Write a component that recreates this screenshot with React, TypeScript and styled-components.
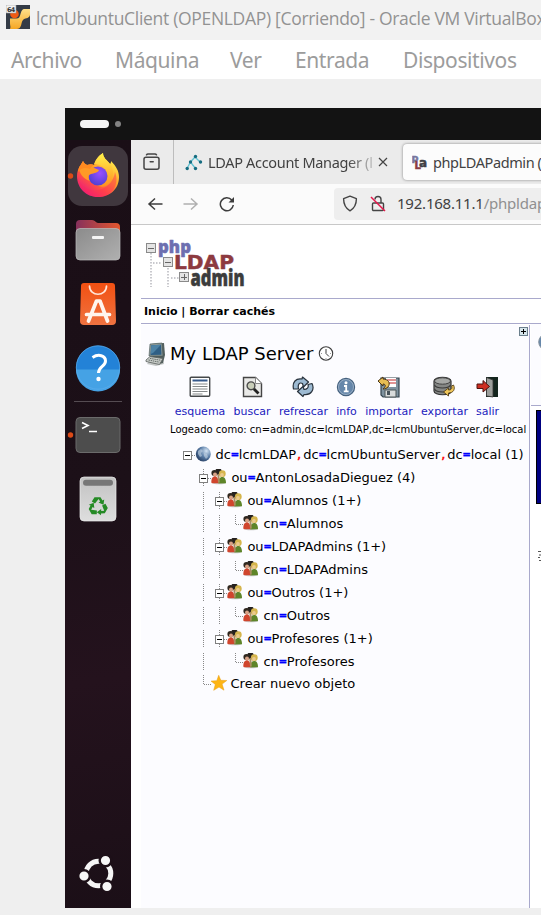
import React from "react";
import styled, { createGlobalStyle } from "styled-components";

const GlobalStyle = createGlobalStyle`
  * { box-sizing: border-box; }
  html, body { margin: 0; padding: 0; background: #efefef; overflow: hidden; }
  svg { display: block; flex: none; }
`;

const ubuntu = `"Noto Sans", "Open Sans", sans-serif`;
const dejavu = `"DejaVu Sans", sans-serif`;

const HostWindow = styled.div`
  width: 541px;
  height: 915px;
  overflow: hidden;
  display: flex;
  flex-direction: column;
  background: #efefef;
  white-space: nowrap;
`;

const TitleBar = styled.header`
  height: 40px;
  flex: none;
  display: flex;
  align-items: center;
  gap: 6px;
  padding: 0 0 6px 6px;
  background: #f2f2f2;
  color: #929292;
  font: 17.5px/24px "Open Sans", sans-serif;
  letter-spacing: -0.31px;
  span { padding-top: 1px; }
`;

const MenuBar = styled.nav`
  height: 39px;
  flex: none;
  display: flex;
  align-items: center;
  padding: 0 0 0 11px;
  background: #fff;
`;

const MenuItem = styled.span<{ $w: number }>`
  width: ${(p) => p.$w}px;
  flex: none;
  color: #9c9c9c;
  font: 21px/32px "Noto Sans", sans-serif;
  letter-spacing: -0.4px;
`;

const Guest = styled.main`
  margin: 29px 0 0 65px;
  width: 476px;
  height: 800px;
  flex: none;
  display: flex;
  flex-direction: column;
  overflow: hidden;
  background: #fff;
`;

const TopPanel = styled.div`
  height: 32px;
  flex: none;
  display: flex;
  align-items: center;
  gap: 6px;
  padding-left: 15px;
  background: #131313;
`;

const Pill = styled.i`
  width: 29px;
  height: 8px;
  border-radius: 4px;
  background: #f5f5f5;
`;

const Dot = styled.i`
  width: 6px;
  height: 6px;
  border-radius: 3px;
  background: #828282;
`;

const Desktop = styled.div`
  flex: 1;
  display: flex;
  min-height: 0;
`;

const Dock = styled.aside`
  width: 66px;
  flex: none;
  display: flex;
  flex-direction: column;
  padding: 4px 0 3px;
  background: linear-gradient(170deg, #1a0e16 0%, #1c1018 45%, #24121d 70%, #1b0f17 100%);
`;

const Slot = styled.div<{ $last?: boolean }>`
  height: 64px;
  flex: none;
  display: flex;
  align-items: center;
  padding-left: 2px;
  margin-top: ${(p) => (p.$last ? "auto" : "0")};
`;

const Separator = styled.hr`
  width: 48px;
  height: 1px;
  flex: none;
  margin: 1px 9px;
  border: 0;
  background: #554c52;
`;

const Browser = styled.section`
  flex: 1;
  min-width: 0;
  display: flex;
  flex-direction: column;
  overflow: hidden;
`;

const TabStrip = styled.div`
  height: 44px;
  flex: none;
  display: flex;
  background: #ebebeb;
`;

const TabsOverview = styled.div`
  width: 43px;
  flex: none;
  display: grid;
  place-items: center;
  padding-right: 1px;
  border-right: 1px solid #bdbdbd;
`;

const Tab = styled.div<{ $active?: boolean }>`
  width: ${(p) => (p.$active ? 200 : 225)}px;
  height: ${(p) => (p.$active ? 36 : 44)}px;
  flex: none;
  margin: ${(p) => (p.$active ? "4px 0 0 4px" : "0")};
  padding: ${(p) => (p.$active ? "0 0 0 9px" : "0 0 0 11px")};
  display: flex;
  align-items: center;
  border-radius: ${(p) => (p.$active ? 4 : 0)}px;
  background: ${(p) => (p.$active ? "#fcfcfc" : "transparent")};
  box-shadow: ${(p) => (p.$active ? "0 0 3px rgba(0,0,0,.45)" : "none")};
  color: #424242;
  font: 14.5px/20px ${ubuntu};
`;

const TabTitle = styled.span<{ $w: number; $fade?: boolean; $ls?: number }>`
  width: ${(p) => p.$w}px;
  overflow: hidden;
  margin-left: 5px;
  margin-top: -1px;
  letter-spacing: ${(p) => p.$ls ?? 0}px;
  mask-image: ${(p) => (p.$fade ? "linear-gradient(90deg, #000 82%, rgba(0,0,0,.1))" : "none")};
`;

const NavBar = styled.div`
  height: 41px;
  flex: none;
  display: flex;
  align-items: center;
  padding: 0 0 1px 16px;
  background: #fbfbfb;
  border-bottom: 1px solid #c8c8c8;
`;

const NavButtons = styled.div`
  display: flex;
  gap: 20px;
  width: 187px;
  flex: none;
`;

const UrlField = styled.div`
  height: 32px;
  width: 230px;
  flex: none;
  display: flex;
  align-items: center;
  gap: 12px;
  padding-left: 8px;
  border-radius: 4px;
  background: #eeeeee;
  color: #404040;
  font: 15px/20px ${ubuntu};
  letter-spacing: -0.22px;
`;

const UrlText = styled.span`
  margin: -1px 0 0 -1px;
`;

const UrlPath = styled.span`
  color: #909090;
`;

const Page = styled.div`
  flex: 1;
  min-height: 0;
  padding-left: 10px;
  display: flex;
  flex-direction: column;
  background: #fff;
  font-family: ${dejavu};
  color: #000;
`;

const Brand = styled.div`
  height: 73px;
  flex: none;
  padding: 14px 0 0 4px;
`;

const PageMenu = styled.div`
  height: 26px;
  flex: none;
  padding-left: 3px;
  border-top: 1px solid #a9a9cc;
  border-bottom: 1px solid #a9a9cc;
  font: bold 11px/25px ${dejavu};
`;

const Columns = styled.div`
  flex: 1;
  min-height: 0;
  display: flex;
`;

const TreePane = styled.div`
  width: 389px;
  flex: none;
  display: flex;
  flex-direction: column;
  margin-top: 1px;
  background: #fcfcff;
  border-right: 1px solid #a9a9cc;
`;

const ExpandRow = styled.div`
  height: 12px;
  flex: none;
  display: flex;
  justify-content: flex-end;
  padding: 2px 1px 0 0;
`;

const ServerRow = styled.div`
  height: 34px;
  flex: none;
  display: flex;
  align-items: center;
  padding-left: 4px;
  font: 18px/24px ${dejavu};
`;

const ServerName = styled.span`
  width: 151px;
  padding-left: 3px;
`;

const Toolbar = styled.div`
  height: 50px;
  flex: none;
  display: flex;
  gap: 8px;
  padding: 5px 0 0 34px;
`;

const Tool = styled.div<{ $w: number }>`
  width: ${(p) => p.$w}px;
  flex: none;
  display: flex;
  flex-direction: column;
  align-items: center;
  gap: 7px;
  color: #1b1bbd;
  font: 11px/14px ${dejavu};
  svg { margin-left: -1px; }
`;

const LoginInfo = styled.div`
  height: 22px;
  flex: none;
  padding: 2px 0 0 29px;
  font: 10px/14px ${dejavu};
`;

const TreeRow = styled.div<{ $h?: number }>`
  height: ${(p) => p.$h ?? 23}px;
  flex: none;
  display: flex;
  align-items: center;
  padding-left: 38px;
  font: 13px/20px ${dejavu};
`;

const Label = styled.span<{ $pad?: number }>`
  padding-left: ${(p) => p.$pad ?? 4.4}px;
`;

const Equals = styled.b`
  display: inline-block;
  width: 8px;
  color: #0000ff;
  font-size: 10.5px;
  line-height: 10px;
  vertical-align: 1px;
  text-indent: -0.4px;
  -webkit-text-stroke: 0.3px #0000ff;
`;

const Comma = styled.em`
  margin-left: 1px;
  margin-right: 2px;
  color: #ff0000;
  font-style: normal;
  -webkit-text-stroke: 0.5px #ff0000;
`;

const DetailPane = styled.div`
  flex: 1;
  min-width: 0;
  padding-left: 1px;
  overflow: hidden;
  display: flex;
  flex-direction: column;
`;

const DetailHead = styled.div`
  height: 82px;
  flex: none;
  padding: 9px 0 0 7px;
  border-bottom: 1px solid #a9a9cc;
  background: #fcfcff;
`;

const NavyBox = styled.div`
  height: 94px;
  flex: none;
  margin: 4px 0 0 5px;
  border: 1px solid #000;
  border-right: 0;
  background: #000080;
`;

const Scrap = styled.div`
  margin: 46px 0 0 7px;
  height: 14px;
`;

function VirtualBoxIcon() {
  return (
    <svg width="24" height="24" viewBox="0 0 24 24">
      <defs>
        <linearGradient id="vb" x1="0" y1="0" x2="0" y2="1">
          <stop offset="0" stopColor="#ffe08a" />
          <stop offset="1" stopColor="#f5a623" />
        </linearGradient>
      </defs>
      <rect width="24" height="24" fill="#343b46" />
      <path d="M24 4h-5c-3 0-3.500 2-4.500 5-.8 3-1.500 4.500-4 4.500H4v5c0 2 1 3.500 0 5.500h7c3 0 4-3 4.500-5.500.6-3 2-4.500 4-5 3-.5 4.500-2 4.500-4z" fill="url(#vb)" />
      <circle cx="8.500" cy="9" r="4.300" fill="#f05a14" />
      <rect width="10" height="8" fill="#f4f4f4" stroke="#999" strokeWidth=".6" />
      <text x="1" y="6.700" fontSize="6.500" fontWeight="bold" fontFamily="DejaVu Sans" fill="#333" textLength="8">64</text>
    </svg>
  );
}

function Firefox() {
  return (
    <svg width="62" height="60" viewBox="0 0 62 60">
      <defs>
        <linearGradient id="ffBody" x1=".85" y1=".1" x2=".2" y2="1">
          <stop offset="0" stopColor="#fff44f" />
          <stop offset=".38" stopColor="#ffa52a" />
          <stop offset=".68" stopColor="#ff4f45" />
          <stop offset="1" stopColor="#e5108c" />
        </linearGradient>
        <radialGradient id="ffGlobe" cx=".6" cy=".35" r=".7">
          <stop offset="0" stopColor="#9a4fff" />
          <stop offset="1" stopColor="#4d3fd0" />
        </radialGradient>
        <linearGradient id="ffFlame" x1="0" y1="0" x2="0" y2="1">
          <stop offset="0" stopColor="#fff24a" />
          <stop offset="1" stopColor="#ff9020" />
        </linearGradient>
      </defs>
      <rect x="1" width="60" height="60" rx="14" fill="#40373e" />
      <circle cx="3.500" cy="30" r="2.700" fill="#dc4a17" />
      <path d="M16 15c1 2 2 3 4 4 3-1 5-1 7 0 2-6 4-9 9-12 0 5 4 7 7 11 1-1 1-2 1-3 5 5 8 10 8 16 0 12-9 20-21 20S10 42 10 30c0-4 1-7 3-10 1-2 2-3 3-5z" fill="url(#ffBody)" />
      <path d="M27 18c2-5 5-8 9-11 0 5 4 7 7 11 4 6 4 13 0 18-3 5-9 6-13 3 8-2 11-8 9-14-2-5-7-7-12-7z" fill="url(#ffFlame)" />
      <circle cx="31" cy="30" r="9.500" fill="url(#ffGlobe)" />
      <path d="M12 21c4-3 9-3 13 0l7 3c-1 3-5 3-8 4-3 1-3 4-1 7-7-2-11-8-11-14z" fill="#ff9a26" />
      <path d="M16 15c1 2 2 3 4 4 3-1 5-1 7 0-2 1-3 2-4 4-5-2-9-1-12 3 0-4 3-7 5-11z" fill="#ff8a20" />
      <path d="M11 32c3 10 14 15 24 11 7-3 12-9 13-17 5 13-3 25-17 25-11 0-19-8-20-19z" fill="#ff2a55" opacity=".45" />
    </svg>
  );
}

function Folder() {
  return (
    <svg width="62" height="60" viewBox="0 0 62 60">
      <defs>
        <linearGradient id="fdB"><stop offset="0" stopColor="#86305c" /><stop offset="1" stopColor="#e4572e" /></linearGradient>
        <linearGradient id="fdF" x2="1" y2="1"><stop offset="0" stopColor="#8b8b8b" /><stop offset="1" stopColor="#b0b0b0" /></linearGradient>
      </defs>
      <path d="M9 14a4 4 0 0 1 4-4h12c3 0 4 3 6 3h18a4 4 0 0 1 4 4v12H9z" fill="url(#fdB)" />
      <rect x="9" y="18.500" width="44" height="31.500" rx="4" fill="url(#fdF)" stroke="#bdbdbd" strokeWidth=".7" />
      <rect x="25" y="26" width="12" height="3" rx="1" fill="#f5f5f5" />
    </svg>
  );
}

function AppCenter() {
  return (
    <svg width="62" height="60" viewBox="0 0 62 60">
      <defs><linearGradient id="bag" x2="0" y2="1"><stop offset="0" stopColor="#f25012" /><stop offset="1" stopColor="#ef7341" /></linearGradient></defs>
      <path d="M17 9h28a3 3 0 0 1 3 3l1 35a4 4 0 0 1-4 4H17a4 4 0 0 1-4-4l1-35a3 3 0 0 1 3-3z" fill="url(#bag)" />
      <path d="M22.500 12c0 11 17 11 17 0" fill="none" stroke="#ffe5d8" strokeWidth="1.700" strokeLinecap="round" />
      <path d="M21.500 47L29.500 27h3.500l7.500 20M19.500 40.500h23" fill="none" stroke="#fff5ee" strokeWidth="3.700" strokeLinejoin="round" strokeLinecap="round" />
    </svg>
  );
}

function Help() {
  return (
    <svg width="62" height="60" viewBox="0 0 62 60">
      <g transform="translate(0 -.5)">
        <circle cx="31" cy="30" r="22" fill="#2382d7" />
        <path d="M9 32h44a22 22 0 0 1-44 0z" fill="#45a2e5" />
        <circle cx="31" cy="30" r="21.700" fill="none" stroke="#5cadec" strokeWidth=".7" />
        <path d="M25.500 20c6-4 13-2 13 3.500 0 5.500-7 5.500-7 12" fill="none" stroke="#fff" strokeWidth="3" />
        <circle cx="31.500" cy="41.500" r="2.200" fill="#fff" />
      </g>
    </svg>
  );
}

function Terminal() {
  return (
    <svg width="62" height="60" viewBox="0 0 62 60">
      <circle cx="3.500" cy="30" r="2.700" fill="#dc4a17" />
      <rect x="9" y="12.500" width="44" height="35" rx="4" fill="#4d4d4d" stroke="#6b6b6b" />
      <path d="M15 17.500l6 3-6 3M22 26.500h8" fill="none" stroke="#fff" strokeWidth="1.600" />
    </svg>
  );
}

function Trash() {
  return (
    <svg width="62" height="60" viewBox="0 0 62 60">
      <defs><linearGradient id="tr" x2="0" y2="1"><stop offset="0" stopColor="#c2c2c2" /><stop offset="1" stopColor="#dedede" /></linearGradient></defs>
      <rect x="13" y="8" width="36" height="44" rx="4" fill="url(#tr)" stroke="#ececec" strokeWidth=".7" />
      <rect x="16" y="10.800" width="30" height="6" rx="3" fill="#777" />
      <g fill="#258a25" transform="translate(31 37.500)">
        {[0, 120, 240].map((r) => (
          <g key={r} transform={`rotate(${r})`}>
            <path d="M-6.200-5L-3.500-9.300h6l2 3.300 1.700-1-.7 5.200L.5-4l1.700-1L.6-7.500-3-3z" />
          </g>
        ))}
      </g>
    </svg>
  );
}

function UbuntuLogo() {
  return (
    <svg width="62" height="60" viewBox="0 0 62 60">
      <circle cx="31.500" cy="30.500" r="12.300" fill="none" stroke="#f5f5f5" strokeWidth="5" />
      {[[17, 33], [38.500, 17.500], [40, 43.500]].map(([x, y]) => (
        <circle key={x} cx={x} cy={y} r="5.800" fill="#f7f7f7" stroke="#1d1018" strokeWidth="2.400" />
      ))}
    </svg>
  );
}

function OverviewIcon() {
  return (
    <svg width="18" height="18" viewBox="0 0 18 18" fill="none" stroke="#464646" strokeWidth="1.500" strokeLinecap="round">
      <path d="M3.500 1.800Q4 1 5 1h7q1 0 1.500.8" />
      <rect x="1" y="4.200" width="15" height="12" rx="2" />
      <path d="M7.200 8.800h3" />
    </svg>
  );
}

function LamIcon() {
  return (
    <svg width="18" height="17" viewBox="0 0 18 17">
      <path d="M10 3L5.500 8 2 14.500M10 3l5 5M5.500 8l5 6.500" stroke="#62c3d3" strokeWidth="1.300" fill="none" />
      {[[10.500, 2.500], [5.500, 8], [15.500, 8], [2.200, 14.500], [10.500, 14.500]].map(([x, y], i) => (
        <circle key={i} cx={x} cy={y} r="1.700" fill="#156c80" />
      ))}
    </svg>
  );
}

function PlaIcon() {
  return (
    <svg width="16" height="17" viewBox="0 0 16 17" fontFamily="DejaVu Sans" fontWeight="bold" strokeWidth=".5">
      <text x="-.5" y="8.500" fontSize="9.500" fill="#77779f" stroke="#77779f">P</text>
      <text x="2.500" y="15" fontSize="10" fill="#8b3b42" stroke="#8b3b42">L</text>
      <text x="7" y="13" fontSize="12" fill="#404044" stroke="#404044">a</text>
    </svg>
  );
}

function Logo() {
  const box = (x: number, y: number, plus?: boolean) => (
    <g transform={`translate(${x} ${y})`} shapeRendering="crispEdges">
      <rect x=".5" y=".5" width="9" height="9" fill="#e4e4e4" stroke="#8a8a8a" />
      <path d={plus ? "M2 5h6M5 2v6" : "M2 5h6"} stroke="#666" strokeWidth="1" />
    </g>
  );
  return (
    <svg width="102" height="50" viewBox="0 0 102 50" fontFamily="Open Sans" fontWeight="800">
      <path d="M6 14v34M23 29v19M8 24h8M26 39h8" stroke="#c9c9ce" strokeWidth="2" strokeDasharray="1.500 1.500" />
      {box(1, 4)}
      {box(18, 18)}
      {box(34, 33, true)}
      <g strokeWidth=".5" strokeLinejoin="round">
        <text x="13" y="13.500" fontSize="18" fill="#6d6fb0" stroke="#6d6fb0" textLength="33" lengthAdjust="spacingAndGlyphs">php</text>
        <text x="29" y="30" fontSize="20" fontFamily="DejaVu Sans" fill="#8d3a40" stroke="#8d3a40" textLength="60" lengthAdjust="spacingAndGlyphs">LDAP</text>
        <text x="45.500" y="47" fontSize="22" fill="#3c3c3c" stroke="#3c3c3c" textLength="54" lengthAdjust="spacingAndGlyphs">admin</text>
      </g>
    </svg>
  );
}

function Computer() {
  return (
    <svg width="22" height="24" viewBox="0 0 22 24">
      <path d="M4 19l14-1 1 4-8 2-9-2z" fill="#8a8f8c" opacity=".5" />
      <path d="M6 2l13-1 1 12-2 8-4 1-9-4z" fill="#54605f" />
      <path d="M5 2l12-1 1 13-14 0z" fill="#8d9996" stroke="#455" strokeWidth=".6" />
      <path d="M6.200 3.300L16 2.700l.5 10-11 .2z" fill="#2f5f85" />
      <path d="M6.200 3.300L16 2.700l-8 8.300-2.300 1z" fill="#4d82a5" />
      <path d="M1 18l4-3.500 13 2-3.500 6L1 19.500z" fill="#c9cdc9" stroke="#59605d" strokeWidth=".8" />
      <path d="M3.500 18l11 2.200M5 16.400l11 1.900" stroke="#666e6b" strokeWidth="1" strokeDasharray="1.500 .7" />
    </svg>
  );
}

function Clock() {
  return (
    <svg width="16" height="16" viewBox="0 0 16 16" fill="#fff" stroke="#3d3d3d">
      <circle cx="8" cy="7.500" r="6.700" strokeWidth="1.100" />
      <path d="M8 3v4.500l3 3" fill="none" strokeWidth="1" />
      <path d="M8 12v1M13 7.500h-1M3 7.500h1" stroke="#999" />
    </svg>
  );
}

const toolIcons: Record<string, React.ReactNode> = {
  esquema: (
    <>
      <rect x="1.200" y="1.200" width="19.500" height="19" rx="1" fill="#fff" stroke="#45484a" strokeWidth="1.400" />
      <path d="M3.500 4.500h15" stroke="#35598b" strokeWidth="2" />
      <path d="M3.500 8h15M3.500 10.500h15M3.500 13h15M3.500 15.500h15M3.500 18h10" stroke="#85898a" strokeWidth="1.200" />
    </>
  ),
  buscar: (
    <>
      <path d="M2.500 1.500h12l6 6v13h-18z" fill="#e9e9e7" stroke="#454545" strokeWidth="1.400" />
      <path d="M14.500 1.500v6h6" fill="#fff" stroke="#888" />
      <path d="M12 12l5.500 5.500" stroke="#222" strokeWidth="2.800" />
      <circle cx="10" cy="9.800" r="3.900" fill="#c9ceb9" stroke="#4b4b4b" strokeWidth="1.400" />
    </>
  ),
  refrescar: (
    <g fill="#9dbad2" stroke="#29333d" strokeWidth="1.200" strokeLinejoin="round">
      <path d="M1.500 13C0 6 4 2 10 3l.5-2 6 5-5 5-1-3.500C7.500 6 5.500 8 6.500 13z" />
      <path d="M20 7.500c3 6-1 12-8 11l-1 2-5.500-5 5.500-5 1 3c3 0 5-2 4-5z" />
    </g>
  ),
  info: (
    <>
      <circle cx="11" cy="11" r="8.600" fill="#6687aa" stroke="#45617e" strokeWidth="1.200" />
      <circle cx="11" cy="11" r="7.500" fill="none" stroke="#a2b5c9" strokeWidth=".8" />
      <path d="M9 10h2.200v5M8.800 15.300h4.800" stroke="#fff" strokeWidth="1.800" fill="none" />
      <circle cx="11" cy="6.800" r="1.500" fill="#fff" />
    </>
  ),
  importar: (
    <>
      <path d="M3 2h18v19H5l-2-2z" fill="#7e929f" stroke="#34444f" strokeWidth="1.200" />
      <path d="M8 2h10v9H8z" fill="#fff" />
      <path d="M9 4h9M9 7h9" stroke="#d87272" strokeWidth="1.300" />
      <path d="M7 14h11v7H7z" fill="#d9dcdc" stroke="#4c5659" />
      <path d="M9 15h3v4H9z" fill="#47535a" />
      <path d="M0 5l5-4v2c5 0 8 4 5 8-1 1-3 2-5 2 3-2 3-5 0-5v2z" fill="#e7bd54" stroke="#4a3514" />
    </>
  ),
  exportar: (
    <>
      <path d="M1 5c0-5 17-5 17 0v10c0 5-17 5-17 0z" fill="#858785" stroke="#343434" strokeWidth="1.200" />
      <ellipse cx="9.500" cy="5" rx="8" ry="3.200" fill="#a6a8a6" stroke="#434343" />
      <path d="M1.500 9c2 4 14 4 16 0M1.500 13c2 4 14 4 16 0" fill="none" stroke="#3a3a3a" strokeWidth="1.200" />
      <path d="M20.500 9c2 4 0 8-5 8v3l-5-4 5-4v2c3 0 4-2 3-4z" fill="#efc65b" stroke="#554016" strokeWidth=".9" />
    </>
  ),
  salir: (
    <>
      <rect x="10" y="1" width="12" height="20" fill="#14251e" />
      <path d="M10.500 1.500L17 4v17l-6.500-1z" fill="#9c9e9b" stroke="#333" strokeWidth=".8" />
      <path d="M1 8h6V4.500l6.500 6L7 16v-3.500H1z" fill="#cd2e22" stroke="#4d1511" />
    </>
  ),
};

function Users() {
  return (
    <svg width="16" height="17" viewBox="1 1.500 16 17">
      <ellipse cx="9" cy="15.500" rx="6.500" ry="1.300" fill="#aaa" opacity=".6" />
      <circle cx="8.500" cy="4.200" r="3.300" fill="#25211f" />
      <circle cx="4.500" cy="5.500" r="3.100" fill="#302820" />
      <circle cx="12.300" cy="6.200" r="3.400" fill="#d5b54d" />
      <ellipse cx="5" cy="7.200" rx="2" ry="2.200" fill="#d9a387" />
      <ellipse cx="12" cy="7.600" rx="1.900" ry="2.100" fill="#ebca8d" />
      <path d="M1.300 15c0-4 1-6 4-6 2 0 3.500 3 3.500 6.800H2z" fill="#d0452d" />
      <path d="M8.500 16c-.5-4 1-6.500 4-6.500 2 0 3.500 2 3.500 6.200z" fill="#5e8529" />
      <path d="M7.300 7l2-1 .5 9H8z" fill="#ab8c60" />
    </svg>
  );
}

function Globe() {
  return (
    <svg width="16" height="17" viewBox="0 0 16 17">
      <defs><radialGradient id="globe" cx=".7" cy=".3" r=".8"><stop offset="0" stopColor="#d4e4f4" /><stop offset=".5" stopColor="#5e81aa" /><stop offset="1" stopColor="#243c61" /></radialGradient></defs>
      <circle cx="8.300" cy="8" r="7.500" fill="url(#globe)" />
      <path d="M3 5l3-2 2 2-2 2 1 3-2 1-2-3zM9 7l3 1 1 3-2 2-2-3z" fill="#c5d3e2" opacity=".6" />
    </svg>
  );
}

function Star() {
  return (
    <svg width="16" height="17" viewBox="1.500 1.500 16 17">
      <path d="M7.700.8l2.100 5 6 .2-4.700 3.600 1.900 6.100-5-3.100-5.300 3.200 1.600-5.900L0 6.600l5.800-.4z" transform="translate(1.500 1)" fill="#fdb515" stroke="#e99c12" strokeWidth=".5" />
    </svg>
  );
}

type Cell = "none" | "line" | "top" | "toggle" | "corner";

function Guide({ kind }: { kind: Cell }) {
  return (
    <svg width="16" height="17" viewBox="0 0 16 17" shapeRendering="crispEdges">
      {(kind === "line" || kind === "toggle") && <path d="M8.500 0v17" stroke="#888" strokeDasharray="1 1" />}
      {kind === "corner" && <path d="M8.500 0v9.500H16" fill="none" stroke="#888" strokeDasharray="1 1" />}
      {(kind === "toggle" || kind === "top") && (
        <>
          <path d="M13 9.500h3" stroke="#888" strokeDasharray="1 1" />
          <rect x="4.500" y="5.500" width="8" height="8" fill="#fff" stroke="#808080" />
          <path d="M6 9.500h5" stroke="#000" />
        </>
      )}
    </svg>
  );
}

const rows: { cells: Cell[]; attr: string; value: string }[] = [
  { cells: ["none", "toggle"], attr: "ou", value: "AntonLosadaDieguez (4)" },
  { cells: ["none", "line", "toggle"], attr: "ou", value: "Alumnos (1+)" },
  { cells: ["none", "line", "line", "corner"], attr: "cn", value: "Alumnos" },
  { cells: ["none", "line", "toggle"], attr: "ou", value: "LDAPAdmins (1+)" },
  { cells: ["none", "line", "line", "corner"], attr: "cn", value: "LDAPAdmins" },
  { cells: ["none", "line", "toggle"], attr: "ou", value: "Outros (1+)" },
  { cells: ["none", "line", "line", "corner"], attr: "cn", value: "Outros" },
  { cells: ["none", "line", "toggle"], attr: "ou", value: "Profesores (1+)" },
  { cells: ["none", "line", "none", "corner"], attr: "cn", value: "Profesores" },
];

const tools: [string, number][] = [
  ["esquema", 50], ["buscar", 38], ["refrescar", 49], ["info", 21],
  ["importar", 48], ["exportar", 47], ["salir", 23],
];

const menus: [string, number][] = [
  ["Archivo", 104], ["Máquina", 115], ["Ver", 65], ["Entrada", 108], ["Dispositivos", 130],
];

export default function App() {
  return (
    <HostWindow>
      <GlobalStyle />
      <TitleBar>
        <VirtualBoxIcon />
        <span>lcmUbuntuClient (OPENLDAP) [Corriendo] - Oracle VM VirtualBox</span>
      </TitleBar>
      <MenuBar>
        {menus.map(([name, w]) => <MenuItem key={name} $w={w}>{name}</MenuItem>)}
      </MenuBar>
      <Guest>
        <TopPanel><Pill /><Dot /></TopPanel>
        <Desktop>
          <Dock>
            <Slot><Firefox /></Slot>
            <Slot><Folder /></Slot>
            <Slot><AppCenter /></Slot>
            <Slot><Help /></Slot>
            <Separator />
            <Slot><Terminal /></Slot>
            <Slot><Trash /></Slot>
            <Slot $last><UbuntuLogo /></Slot>
          </Dock>
          <Browser>
            <TabStrip>
              <TabsOverview><OverviewIcon /></TabsOverview>
              <Tab>
                <LamIcon />
                <TabTitle $w={170} $fade $ls={-0.32}>LDAP Account Manager (l</TabTitle>
                <svg width="10" height="10" viewBox="0 0 10 10"><path d="M1 1l8 8M9 1L1 9" stroke="#444" strokeWidth="1.200" /></svg>
              </Tab>
              <Tab $active>
                <PlaIcon />
                <TabTitle $w={170} $ls={-0.4}>phpLDAPadmin (1.2)</TabTitle>
              </Tab>
            </TabStrip>
            <NavBar>
              <NavButtons>
                <svg width="16" height="16" viewBox="0 0 16 16" fill="none" stroke="#3d3d3d" strokeWidth="1.500"><path d="M15.500 8H2M8 2.500L2 8l6 5.500" /></svg>
                <svg width="16" height="16" viewBox="0 0 16 16" fill="none" stroke="#b0b0b0" strokeWidth="1.500"><path d="M.5 8H14M8 2.500L14 8l-6 5.500" /></svg>
                <svg width="16" height="16" viewBox="0 0 16 16" fill="none" stroke="#3d3d3d" strokeWidth="1.500"><path d="M14.300 9a6.500 6.500 0 1 1-1.500-5" /><path d="M15 1v5.500H9.500z" fill="#3d3d3d" stroke="none" /></svg>
              </NavButtons>
              <UrlField>
                <svg width="16" height="17" viewBox="0 0 16 17"><path d="M8 1.200l6.400 2.500c0 6-2 9.500-6.400 12.100C3.600 13.200 1.600 9.700 1.600 3.700z" fill="none" stroke="#444" strokeWidth="1.400" strokeLinejoin="round" /></svg>
                <svg width="16" height="17" viewBox="0 0 16 17" fill="none" stroke="#444" strokeWidth="1.400"><rect x="2.500" y="8" width="11" height="7.500" rx="1" /><path d="M5 4.500C5 .5 11 .5 11 4.500V8" /><path d="M1 2l14 14" stroke="#e5194c" strokeWidth="1.500" /></svg>
                <UrlText>192.168.11.1<UrlPath>/phpldapadmin</UrlPath></UrlText>
              </UrlField>
            </NavBar>
            <Page>
              <Brand><Logo /></Brand>
              <PageMenu>Inicio | Borrar cachés</PageMenu>
              <Columns>
                <TreePane>
                  <ExpandRow>
                    <svg width="9" height="9" viewBox="0 0 9 9" shapeRendering="crispEdges"><rect x=".5" y=".5" width="8" height="8" fill="#d6e5ea" stroke="#6b7f8c" /><path d="M2 4.500h5M4.500 2v5" stroke="#000" /></svg>
                  </ExpandRow>
                  <ServerRow>
                    <Computer />
                    <ServerName>My LDAP Server</ServerName>
                    <Clock />
                  </ServerRow>
                  <Toolbar>
                    {tools.map(([name, w]) => (
                      <Tool key={name} $w={w}>
                        <svg width="22" height="22" viewBox="0 0 22 22">{toolIcons[name]}</svg>
                        {name}
                      </Tool>
                    ))}
                  </Toolbar>
                  <LoginInfo>Logeado como: cn=admin,dc=lcmLDAP,dc=lcmUbuntuServer,dc=local</LoginInfo>
                  <TreeRow>
                    <Guide kind="top" />
                    <Globe />
                    <Label>dc<Equals>=</Equals>lcmLDAP<Comma>,</Comma>dc<Equals>=</Equals>lcmUbuntuServer<Comma>,</Comma>dc<Equals>=</Equals>local (1)</Label>
                  </TreeRow>
                  {rows.map((r) => (
                    <TreeRow key={r.attr + r.value}>
                      {r.cells.map((c, i) => <Guide key={i} kind={c} />)}
                      <Users />
                      <Label>{r.attr}<Equals>=</Equals>{r.value}</Label>
                    </TreeRow>
                  ))}
                  <TreeRow $h={21}>
                    <Guide kind="none" />
                    <Guide kind="corner" />
                    <Star />
                    <Label $pad={3.5}>Crear nuevo objeto</Label>
                  </TreeRow>
                </TreePane>
                <DetailPane>
                  <DetailHead>
                    <svg width="18" height="18" viewBox="0 0 18 18"><circle cx="9" cy="9" r="8.300" fill="#6687aa" stroke="#8794a0" /></svg>
                  </DetailHead>
                  <NavyBox />
                  <Scrap>
                    <svg width="4" height="12" viewBox="0 0 4 12"><path d="M0 1.500h3M1 5h2M0 7.500h2M1 10.500h3" stroke="#555" /></svg>
                  </Scrap>
                </DetailPane>
              </Columns>
            </Page>
          </Browser>
        </Desktop>
      </Guest>
    </HostWindow>
  );
}
